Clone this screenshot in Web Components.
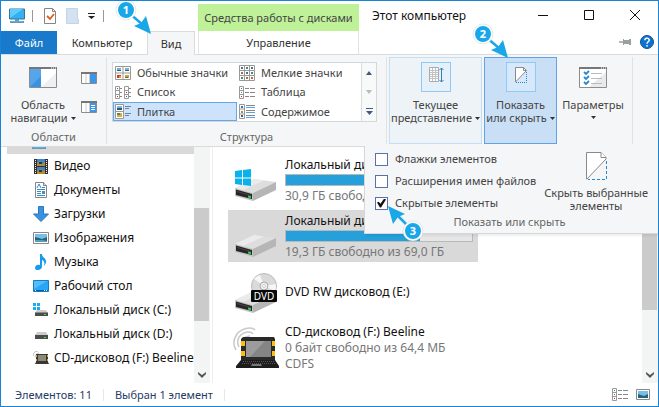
<!DOCTYPE html>
<html lang="ru">
<head>
<meta charset="utf-8">
<title>Этот компьютер</title>
<style>
html,body{margin:0;height:100%}
body{font:11px/16px "Noto Sans","Open Sans",sans-serif;color:#444;background:#fff}
</style>
</head>
<body>
<explorer-window></explorer-window>
<script>
const ICONS = {
pc:['0 0 16 16','<path d="M.5 1h15v10h-15z" fill="#32b1f5" stroke="#39738f"/><path d="M1 10L14 1H1z" fill="#5fccff"/><path d="M6 11h4v2H6zM1 13h14v2H1z" fill="#7394a7"/><path d="M2 13h12v1H2z" fill="#4db9f0"/>'],
props:['0 0 12 16','<path d="M.5.5h8l3 3v12H.5z" fill="#fff" stroke="#858585"/><path d="M8.500.5v3h3" fill="none" stroke="#858585"/><path d="M3 8l3 3 4-5" fill="none" stroke="#e45a1d" stroke-width="1.800"/>'],
folder:['0 0 13 16','<path d="M.5.5h11v11h1v4H.5z" fill="#d3e2f1" stroke="#c2d4e6"/>'],
qmenu:['0 0 7 6','<path d="M0 0h7v1H0zM0 3h7L3.500 6z" fill="#222"/>'],
down:['0 0 5 3','<path d="M0 0h5L2.500 3z" fill="#333"/>'],
min:['0 0 10 10','<path d="M0 5.500h10" stroke="#111"/>'],
max:['0 0 10 10','<path d="M.5.5h9v9h-9z" fill="none" stroke="#111"/>'],
close:['0 0 10 10','<path d="M0 0l10 10M10 0L0 10" stroke="#111"/>'],
pin:['0 0 12 8','<path d="M0 4h5" stroke="#98a29b" stroke-width="1.500"/><path d="M4 1h1v1h5V1h2v6h-2V6H5v1H4z" fill="#98a29b"/>'],
help:['0 0 14 14','<circle cx="7" cy="7" r="6.500" fill="#0a74d0" stroke="#17508a"/><path d="M4.800 5.300c0-3 4.600-2.800 4.400 0C9.100 6.800 7 6.800 7 8.800" fill="none" stroke="#fff" stroke-width="1.500"/><circle cx="7" cy="10.800" r=".9" fill="#fff"/>'],
nav:['0 0 28 21','<path d="M.5.5h27v20H.5z" fill="#fff" stroke="#8c8c8c"/><path d="M12 20L27 6v14z" fill="#eef1f2"/><path d="M0 0h28v2H0z" fill="#777"/><path d="M22 1h1m1 0h1m1 0h1" stroke="#fff"/><path d="M1 2h11v18H1z" fill="#3a92e3"/><path d="M1 20L12 9V2H1z" fill="#56a5ea"/>'],
preview:['0 0 16 12','<path d="M.5.500h15v11H.5z" fill="#fff" stroke="#8c8c8c"/><path d="M0 0h16v2H0z" fill="#777"/><path d="M5 2v9M8.500 2v9" stroke="#ccc"/><path d="M9 2h6v9H9z" fill="#3d95e5"/>'],
details:['0 0 16 12','<path d="M.5.500h15v11H.5z" fill="#fff" stroke="#8c8c8c"/><path d="M0 0h16v2H0z" fill="#777"/><path d="M5 2v9M8.500 2v9" stroke="#ccc"/><path d="M9 2h6v9H9z" fill="#3d95e5"/><path d="M10 4.500h4m-4 2h4m-4 2h4" stroke="#fff"/>'],
medium:['0 0 16 14','<path d="M.5.500h15v13H.5zM8 0v14M0 7h16" fill="#fff" stroke="#999"/><path d="M2 2h4v2H2zM10 2h4v2h-4z" fill="#78b0dc"/><path d="M2 4h4v1H2zM10 4h4v1h-4z" fill="#315f73"/><path d="M2 9h4v3H2z" fill="#c9372c"/><path d="M4 10h2v2H4z" fill="#e8a536"/><path d="M10 9h4v3h-4z" fill="#d39b36"/><path d="M10 11h3v1h-3z" fill="#49763b"/>'],
small:['0 0 16 16','<path d="M.5.5h15v15H.5zM5.500 0v16M10.500 0v16M0 5.500h16M0 10.500h16" fill="#fff" stroke="#999"/><path d="M2 2h2v2H2zM7 7h2v2H7zM12 2h2v2h-2z" fill="#43749d"/><path d="M7 2h2v2H7zM2 12h2v2H2zM12 7h2v2h-2z" fill="#4a8b58"/><path d="M2 7h2v2H2zM12 12h2v2h-2zM7 12h2v2H7z" fill="#b9683a"/>'],
list:['0 0 16 13','<path d="M.5.5h4v12h-4zM0 4.500h5M0 8.500h5M9.500.5h4v12h-4zM9 4.500h5M9 8.500h5" fill="#fff" stroke="#999"/><path d="M5 2.500h2m-2 4h2m-2 4h2M14 2.500h2m-2 4h2m-2 4h2" stroke="#888"/><path d="M2 2h1v1H2zM11 10h1v1h-1z" fill="#326ea5"/><path d="M2 10h1v1H2zM11 6h1v1h-1z" fill="#d22"/>'],
table:['0 0 16 13','<path d="M.5.5h4v12h-4zM0 4.500h5M0 8.500h5" fill="#fff" stroke="#999"/><path d="M6 2.500h4m1 0h5M6 6.500h4m1 0h5M6 10.500h4m1 0h5" stroke="#888"/><path d="M2 2h1v1H2z" fill="#326ea5"/><path d="M2 6h1v1H2z" fill="#48a"/><path d="M2 10h1v1H2z" fill="#d22"/>'],
tile:['0 0 16 15','<path d="M.5.5h8v14h-8zM0 7.500h9" fill="#fff" stroke="#999"/><path d="M2 2h5v4H2z" fill="#79b5e5"/><path d="M2 4h5v2H2z" fill="#31596c"/><path d="M2 9h5v4H2z" fill="#d4b044"/><path d="M2 9h3v2H2z" fill="#548b46"/><path d="M10 2.500h6m-6 2h4m-4 5h6m-6 2h4" stroke="#71849a"/>'],
content:['0 0 16 15','<path d="M.5.5h5v14h-5zM0 5h6M0 10h6" fill="#fff" stroke="#999"/><path d="M2 2h2v2H2z" fill="#297aa5"/><path d="M2 7h2v2H2z" fill="#b48a32"/><path d="M2 11h2v2H2z" fill="#246a9e"/><path d="M7 1.500h9M7 6.500h9M7 11.500h9" stroke="#888"/><path d="M7 3.500h9M7 8.500h9M7 13.500h9" stroke="#5ca4ea"/>'],
up:['0 0 6 4','<path d="M0 4L3 0l3 4z" fill="#42587c"/>'],
dn:['0 0 6 4','<path d="M0 0l3 4 3-4z" fill="#b9b9b9"/>'],
more:['0 0 7 7','<path d="M0 0h7v1H0zM0 3h7L3.500 7z" fill="#42587c"/>'],
view:['0 0 16 16','<path d="M1.500.5h9v14h-9z" fill="#fff" stroke="#aaa"/><path d="M2 3.500h8m-8 2h8m-8 2h8m-8 2h8m-8 2h8M4.500 1v13M7.500 1v13" stroke="#c2c2c2"/><path d="M13.500 1v14m-2-12l2-2 2 2m-4 10l2 2 2-2" fill="none" stroke="#347fb6"/>'],
hide:['0 0 21 28','<path d="M.5 27V.5h14.500l5 5V7L1 27z" fill="#fff" stroke="#8a8a8a"/><path d="M15 .5v5h5" fill="#fff" stroke="#8a8a8a"/><path d="M20.500 9v18.500H2" fill="none" stroke="#2686cb" stroke-dasharray="3 2"/>'],
hideSmall:['0 0 12 16','<path d="M.5 15V.5h8l3 3L.5 15z" fill="#fff" stroke="#8a8a8a"/><path d="M8.500.5v3h3" fill="none" stroke="#8a8a8a"/><path d="M11.500 5v10.500H1" fill="none" stroke="#2686cb" stroke-dasharray="1 1"/>'],
options:['0 0 28 21','<path d="M.5.5h27v20H.5z" fill="#fff" stroke="#8c8c8c"/><path d="M10 20L27 5v15z" fill="#e8ebec"/><path d="M0 0h28v2H0z" fill="#777"/><path d="M22 1h1m1 0h1m1 0h1" stroke="#fff"/><path d="M5 5l2 2 3-3M5 10l2 2 3-3M5 15l2 2 3-3" stroke="#2887d2" stroke-width="1.800" fill="none"/><path d="M12 6.500h11m-11 5h11m-11 5h11" stroke="#bbb"/>'],
video:['0 0 16 16','<path d="M1 1h14v15H1z" fill="#303030"/><path d="M4 1h8v7H4zM4 9h8v7H4z" fill="#3d83d5"/><path d="M4 5l3-2 2 3 3-2v4H4zM4 13l4-2 2 2 2-1v4H4z" fill="#ba8c25"/><path d="M6 4h3v2H6zM6 12h3v2H6z" fill="#1e384f"/><path d="M2.500 2v14M13.500 2v14" stroke="#eee" stroke-dasharray="1 1"/>'],
docs:['0 0 16 16','<path d="M2.500.500h8l3 3v12h-11z" fill="#fff" stroke="#858585"/><path d="M10.500.5v3h3" fill="#ddd" stroke="#858585"/><path d="M4 6l2-4 2 4M9 5.500h3M4 7.500h8m-8 2h4m-4 2h4m-4 2h8" fill="none" stroke="#328bcc"/><path d="M9 9h3v3H9z" fill="#52909d"/>'],
downl:['0 0 16 16','<path d="M5.500.500h5V8h5L8 15.500.5 8h5z" fill="#3a91df" stroke="#2879bd"/>'],
pics:['0 0 16 12','<path d="M.5.5h15v11H.5z" fill="#fff" stroke="#888"/><path d="M2 2h12v8H2z" fill="#79bee9"/><path d="M2 5l4 1 3 1 5-2v5H2z" fill="#267"/><path d="M2 8h8l4 1v1H2z" fill="#589eb9"/>'],
thumb:['0 0 14 11','<path d="M.5.5h13v10H.5z" fill="#fff" stroke="#888"/><path d="M2 2h10v7H2z" fill="#79bee9"/><path d="M2 5l3 1 3 1 4-2v4H2z" fill="#267"/>'],
music:['0 0 16 16','<path d="M7 0h2c0 4 5 4 4 9-1 1-1 2-2 3 1-4 0-5-2-6v7c-1 4-7 4-7 1 0-2 2-4 5-3z" fill="#159ced"/>'],
desk:['0 0 16 12','<path d="M.5.5h15v11H.5z" fill="#28a7f6" stroke="#187cc2"/><path d="M1 9L14 1H1z" fill="#51bdfc"/><path d="M1 10.500h14" stroke="#075b96"/><path d="M2 10.500h1m8 0h1m1 0h1" stroke="#fff"/>'],
diskc:['0 0 16 14','<path d="M0 0h3v3H0zm4 0h3v3H4zM0 4h3v3H0zm4 0h3v3H4z" fill="#16afeb"/><path d="M4 7h9l2 3H2z" fill="#ccc"/><path d="M2 9.500h13V13H2z" fill="#4c4c4c"/><path d="M11 11.500h2" stroke="#43dd57"/>'],
disk:['0 0 16 14','<path d="M4 5h9l2 3H2z" fill="#ccc"/><path d="M2 8h13v4H2z" fill="#4c4c4c"/><path d="M11 10.500h2" stroke="#43dd57"/>'],
cd:['0 0 16 14','<path d="M0 5c0-3 2-5 5-5M2 6c0-2 2-4 4-4" stroke="#bbb" fill="none"/><path d="M3 3h12v8l1 2H2l1-2z" fill="#383838"/><path d="M5 4h8v6H5z" fill="#8a8a80"/><path d="M3 4h1v2H3zm11 0h1v2h-1zM3 8h1v2H3zm11 0h1v2h-1z" fill="#e9ae1b"/>'],
chev:['0 0 8 6','<path d="M0 0l4 3 4-3v2L4 6 0 2z" fill="#555"/>'],
laptop:['0 0 48 42','<path d="M4 23C-2 13 6 1 18 1c2 0 4 1 5 2M7 20C3 12 9 5 17 5c2 0 3 0 4 2M10 17c-2-4 3-8 8-8" fill="none" stroke="#c9c9c9" stroke-width="1.500"/><path d="M11 10h31l1 2v22H9V12z" fill="#292929"/><path d="M14 14h25v16H14z" fill="#858585"/><path d="M14 14h19L18 30h-4z" fill="#9c9c9c"/><path d="M9 14h4v5H9zm0 10h4v5H9zM40 14h3v5h-3zm0 10h3v5h-3z" fill="#ffbc12"/><path d="M9 33h34l4 6v2H4v-2z" fill="#1d1d1d"/><path d="M11 34.500h31M10 36.500h34" stroke="#555" stroke-dasharray="1 1"/><path d="M20 37h9l1 2H19z" fill="#777"/>']
};
const drive='<path d="M1 30l19-9 22 3-23 11z" fill="#dedede"/><path d="M1 30l19-9 10 1.500L9 32z" fill="#ebebeb"/><path d="M1 30l18 5v8L1 38z" fill="#c4c4c4"/><path d="M2 31.500l16 4.500v5L2 37z" fill="#262626"/><path d="M3 33l14 4v1L3 34z" fill="#484848"/><path d="M19 35l23-11v8L19 43z" fill="#b6b6b6"/><path d="M14 37.500l3 .8v2l-3-.8z" fill="#25dc45"/>';
ICONS.bigD=['0 0 44 44',drive];
ICONS.bigC=['0 0 44 44',drive+'<path d="M1 13l7-1v7.500H1zM9 12l8-1v8.500H9zM1 20.500h7V27l-7-1zM9 20.500h8V28l-8-1z" fill="#08b2ed"/>'];
ICONS.dvd=['0 0 44 44',drive+'<circle cx="30" cy="16" r="12.500" fill="#dadada" stroke="#bbb"/><path d="M30 16L20 9a13 13 0 016-4zM30 16l11 5a13 13 0 001-7z" fill="#f6f6f6"/><circle cx="30" cy="16" r="4" fill="#eee" stroke="#aaa"/><circle cx="30" cy="16" r="1.500" fill="#fff" stroke="#aaa" stroke-width=".5"/><rect x="17" y="20" width="26" height="12" rx="1" fill="#080808"/><text x="30" y="29.500" text-anchor="middle" font-size="10" fill="#fff" font-family="Noto Sans">DVD</text>'];

const define=(name,render)=>customElements.define(name,class extends HTMLElement{
  connectedCallback(){
    if(this.shadowRoot)return;
    const t=document.createElement('template');
    t.innerHTML='<style>*{box-sizing:border-box}button{font:inherit;color:inherit;background:none;border:0;padding:0;margin:0}</style>'+render(this);
    this.attachShadow({mode:'open'}).append(t.content.cloneNode(true));
  }
});
const a=(e,n)=>e.getAttribute(n)||'';

define('ui-icon',e=>{const [vb,body]=ICONS[a(e,'name')];const [, ,w,h]=vb.split(' ');
  return `<style>:host{display:inline-flex;flex:none}svg{display:block}</style><svg width="${w}" height="${h}" viewBox="${vb}" aria-hidden="true">${body}</svg>`});

define('call-out',e=>{
  const left=e.hasAttribute('left');
  const arrow=left?'<path d="M34 34L18 18" stroke="#1aa7e8" stroke-width="2.500"/><path d="M9 9l17 8-7 3-5 7z" fill="#1aa7e8"/>':'<path d="M14 14l14 12" stroke="#1aa7e8" stroke-width="2.500"/><path d="M36 35L19 27l7-3 5-7z" fill="#1aa7e8"/>';
  const c=left?34:11;
  return `<style>:host{position:absolute;z-index:5;pointer-events:none}svg{display:block;overflow:visible}</style>
  <svg width="46" height="46">${arrow}<circle cx="${c}" cy="${c}" r="9" fill="#1aa7e8" stroke="#fff" stroke-width="2"/><circle cx="${c}" cy="${c}" r="10" fill="none" stroke="#c4d4dc" stroke-width=".5"/><text x="${c}" y="${c+4}" text-anchor="middle" font-family="Noto Sans" font-size="11" font-weight="700" fill="#fff">${a(e,'n')}</text></svg>`});

define('title-area',()=>`<style>
:host{display:grid;grid-template-columns:197px 161px 1fr auto;height:53px;position:relative;color:#333}
.left,.ctx{display:flex;flex-direction:column}
.quick{display:flex;align-items:center;height:30px;padding-left:8px}
.quick button{display:flex}.quick .a{margin-left:11px}.quick .b{margin-left:10px}.quick .c{margin-left:9px}
.sep{width:1px;height:12px;background:#999;margin-left:7px}.sep.last{margin-left:8px}
.tabs{display:flex;height:23px}
.tabs button{height:23px}
.file{width:56px;background:#1979ca!important;color:#fff!important}
.comp{flex:1}
.view{width:48px;height:24px!important;background:#f5f6f7!important;border:1px solid #dadbdc!important;border-bottom:0!important;margin-right:3px!important;position:relative;z-index:1}
.ctx .h{background:#bff199;height:27px;margin-top:3px;display:flex;align-items:center;justify-content:center;white-space:nowrap;color:#444}
.ctx button{height:23px;border:solid #e3e3e3;border-width:0 1px}
h1{font:12px/16px "Noto Sans",sans-serif;color:#111;margin:7px 0 0 13px;white-space:nowrap}
.right{display:flex;flex-direction:column;justify-content:space-between;align-items:flex-end}
.win{display:flex;gap:36px;padding:9px 18px 0 0}.win button{display:flex}
.tools{display:flex;align-items:center;gap:9px;padding:0 4px 5px 0}.tools button{display:flex}
.c1{left:114px;top:-2px}
.c2{left:471px;top:22px}
</style>
<div class="left"><div class="quick"><ui-icon name="pc"></ui-icon><span class="sep"></span><button class="a" aria-label="Свойства"><ui-icon name="props"></ui-icon></button><button class="b" aria-label="Новая папка"><ui-icon name="folder"></ui-icon></button><button class="c" aria-label="Настройка"><ui-icon name="qmenu"></ui-icon></button><span class="sep last"></span></div>
<div class="tabs"><button class="file">Файл</button><button class="comp">Компьютер</button><button class="view">Вид</button></div></div>
<div class="ctx"><div class="h">Средства работы с дисками</div><button>Управление</button></div>
<h1>Этот компьютер</h1>
<div class="right"><div class="win"><button aria-label="Свернуть"><ui-icon name="min"></ui-icon></button><button aria-label="Развернуть"><ui-icon name="max"></ui-icon></button><button aria-label="Закрыть"><ui-icon name="close"></ui-icon></button></div>
<div class="tools"><button aria-label="Закрепить"><ui-icon name="pin"></ui-icon></button><button aria-label="Справка"><ui-icon name="help"></ui-icon></button></div></div>
<call-out class="c1" n="1"></call-out><call-out class="c2" n="2"></call-out>`);

define('ribbon-group',e=>`<style>
:host{display:flex;flex-direction:column;border-right:1px solid #e1e2e3}
.b{flex:1;display:flex}.l{text-align:center;height:14px;line-height:14px;color:#666}
</style><div class="b"><slot></slot></div>${a(e,'label')?`<div class="l">${a(e,'label')}</div>`:''}`);

define('ribbon-button',e=>`<style>
:host{display:flex}
button{display:flex;flex-direction:column;align-items:center;line-height:13px;width:100%;border:1px solid transparent;padding-top:4px;white-space:nowrap}
.i{width:30px;height:30px;display:flex;align-items:center;justify-content:center;margin-bottom:6px;border:1px solid transparent}
:host([hot]) button{background:#edf3f7;border-color:#c4dff5}:host([hot]) .i,:host([on]) .i{border-color:#90c8f6;background:#e5f1fa}
:host([hot]) .i,:host([on]) .i{padding-bottom:5px}
:host([on]) button{background:#c9dff6;border-color:#62a2e4}:host([on]) .i{background:#d6e8f9}
.d{vertical-align:2px;margin-left:3px}.alone{margin:5px 0 0}
</style><button><span class="i"><ui-icon name="${a(e,'icon')}"></ui-icon></span><span>${a(e,'l1')}</span>${a(e,'l2')?`<span>${a(e,'l2')}<ui-icon class="d" name="down"></ui-icon></span>`:'<ui-icon class="alone" name="down"></ui-icon>'}</button>`);

define('view-gallery',()=>`<style>
:host{display:grid;grid-template-columns:1fr 15px;border:1px solid #d5d8da;background:#fff;margin:5px 9px 0 5px;width:265px;height:60px}
.g{display:grid;grid-template-columns:124px 1fr;grid-template-rows:19px 20px 19px;min-width:0}
.g button{display:flex;align-items:center;gap:6px;padding-left:2px;border:0;white-space:nowrap}
.g .on{background:#cde3fb;border:1px solid #67a7e6;padding-left:1px}
.s{display:grid;grid-template-rows:1fr 1fr 1fr;border-left:1px solid #dadbdc;background:#f8f9f9}.s button{display:grid;place-items:center}
</style><div class="g">${[['medium','Обычные значки'],['small','Мелкие значки'],['list','Список'],['table','Таблица'],['tile','Плитка'],['content','Содержимое']].map(([i,t])=>`<button class="${i=='tile'?'on':''}"><ui-icon name="${i}"></ui-icon>${t}</button>`).join('')}</div>
<div class="s"><button aria-label="Вверх"><ui-icon name="up"></ui-icon></button><button aria-label="Вниз"><ui-icon name="dn"></ui-icon></button><button aria-label="Ещё"><ui-icon name="more"></ui-icon></button></div>`);

define('check-item',e=>`<style>
:host{display:block}
label{display:flex;align-items:center;gap:7px;height:22px;white-space:nowrap}
input{appearance:none;margin:0;width:13px;height:13px;border:1px solid #5b70a8;background:#fff;display:grid;place-items:center}
input:checked::before{content:"";width:9px;height:9px;background:#111;clip-path:polygon(0 45%,20% 35%,38% 58%,80% 0,100% 12%,45% 100%,32% 100%)}
</style><label><input type="checkbox" ${e.hasAttribute('checked')?'checked':''}>${a(e,'text')}</label>`);

define('hide-popup',()=>`<style>
:host{position:absolute;z-index:3;right:0;top:100%;width:294px;background:#f5f6f7;border:solid #d5d7d8;border-width:0 0 1px 1px;box-shadow:1px 2px 2px #0001}
.r{display:flex;padding:2px 10px 0;justify-content:space-between}
button{display:flex;flex-direction:column;align-items:center;line-height:13px;padding-top:4px;white-space:nowrap}
ui-icon{margin-bottom:6px}
.l{text-align:center;line-height:16px;padding-bottom:3px;color:#666;height:19px;padding-right:4px}
call-out{left:14px;top:51px}
</style><div class="r"><div><check-item text="Флажки элементов"></check-item><check-item text="Расширения имен файлов"></check-item><check-item text="Скрытые элементы" checked></check-item></div>
<button><ui-icon name="hide"></ui-icon><span>Скрыть выбранные</span><span>элементы</span></button></div><div class="l">Показать или скрыть</div><call-out left n="3"></call-out>`);

define('ribbon-bar',()=>`<style>
:host{display:flex;position:relative;background:#f5f6f7;border:solid #dadbdc;border-width:1px 0;height:93px;padding:2px 0}
.small{display:flex;flex-direction:column;gap:17px;padding:15px 8px 0 4px}.small button{display:flex}
.g1{width:106px}.nav{width:68px;margin-left:8px}
.g3{padding-right:5px}
.cur{width:93px;margin-left:2px}.show{width:73px;margin:0 2px}.opt{width:68px}
</style>
<ribbon-group class="g1" label="Области"><ribbon-button class="nav" icon="nav" l1="Область" l2="навигации"></ribbon-button><div class="small"><button aria-label="Область просмотра"><ui-icon name="preview"></ui-icon></button><button aria-label="Область сведений"><ui-icon name="details"></ui-icon></button></div></ribbon-group>
<ribbon-group label="Структура"><view-gallery></view-gallery></ribbon-group>
<ribbon-group class="g3"><ribbon-button class="cur" hot icon="view" l1="Текущее" l2="представление"></ribbon-button><ribbon-button class="show" on icon="hideSmall" l1="Показать" l2="или скрыть"></ribbon-button><ribbon-button class="opt" icon="options" l1="Параметры"></ribbon-button></ribbon-group>
<hide-popup></hide-popup>`);

define('scroll-bar',e=>`<style>
:host{display:flex;flex-direction:column;width:16px;flex:none;background:#f3f5f5}
i{background:#cbcbcb;margin-right:1px}.t{flex:${a(e,'before')}}i{flex:${a(e,'thumb')}}.u{flex:${a(e,'after')};display:flex;align-items:flex-end;justify-content:center}
ui-icon{margin-bottom:5px}
</style><span class="t"></span><i></i><span class="u"><ui-icon name="chev"></ui-icon></span>`);

define('nav-tree',()=>`<style>
:host{display:flex;width:212px;flex:none;border-right:1px solid #eee;font-size:12px;color:#111}
nav{flex:1;min-width:0;display:flex;flex-direction:column;justify-content:flex-end;overflow:hidden;padding-bottom:13px}
a{display:flex;align-items:center;height:24px;flex:none;padding-left:32px;color:inherit;text-decoration:none;white-space:nowrap}
.i{width:16px;display:flex;justify-content:center;margin-right:5px}
.root{background:#d9d9d9;padding-left:24px;margin-left:6px}
scroll-bar{margin-right:2px}
</style><nav><a href="#" class="root" aria-label="Этот компьютер"><span class="i"><ui-icon name="pc"></ui-icon></span></a>${[['video','Видео'],['docs','Документы'],['downl','Загрузки'],['pics','Изображения'],['music','Музыка'],['desk','Рабочий стол'],['diskc','Локальный диск (C:)'],['disk','Локальный диск (D:)'],['cd','CD-дисковод (F:) Beeline']].map(([i,t])=>`<a href="#"><span class="i"><ui-icon name="${i}"></ui-icon></span>${t}</a>`).join('')}</nav><scroll-bar before="61" thumb="113" after="62"></scroll-bar>`);

define('drive-tile',e=>`<style>
:host{display:flex;align-items:center;width:250px;height:52px;color:#777;font-size:12px;white-space:nowrap}
:host([sel]){background:#d9d9d9}
.i{width:48px;margin:0 5px 0 4px;display:flex;justify-content:center}
.b{flex:1;min-width:0;margin-right:5px}.n{color:#111}
.m{height:12px;border:1px solid #b9b9b9;background:#e6e6e6;margin:1px 0 2px}.m i{display:block;height:100%;background:#26a0da}
</style><span class="i"><ui-icon name="${a(e,'icon')}"></ui-icon></span><div class="b"><div class="n">${a(e,'name')}</div>${a(e,'fill')?`<div class="m"><i style="width:${a(e,'fill')}"></i></div>`:''}<slot></slot></div>`);

define('file-pane',()=>`<style>
:host{display:flex;flex:1;min-width:0}
main{flex:1;min-width:0;display:flex;flex-direction:column;gap:4px;padding:7px 0 0 15px}
</style><main><drive-tile icon="bigC" name="Локальный диск (C:)" fill="86%">30,9 ГБ свободно из 232 ГБ</drive-tile><drive-tile sel icon="bigD" name="Локальный диск (D:)" fill="72%">19,3 ГБ свободно из 69,0 ГБ</drive-tile><drive-tile icon="dvd" name="DVD RW дисковод (E:)"></drive-tile><drive-tile icon="laptop" name="CD-дисковод (F:) Beeline">0 байт свободно из 64,4 МБ<br>CDFS</drive-tile></main><scroll-bar before="0" thumb="163" after="73"></scroll-bar>`);

define('status-bar',()=>`<style>
:host{display:flex;align-items:center;height:23px;padding:0 8px 0 14px;color:#1f3b66}
span{border-right:1px solid #e8e8e8;padding-right:11px;margin-right:11px;line-height:12px}
div{margin-left:auto;display:flex;align-items:center;gap:8px}button{display:flex}
</style><span>Элементов: 11</span><span>Выбран 1 элемент</span><div><button aria-label="Таблица"><ui-icon name="table"></ui-icon></button><button aria-label="Значки"><ui-icon name="thumb"></ui-icon></button></div>`);

define('explorer-window',()=>`<style>
:host{display:flex;flex-direction:column;height:100vh;box-sizing:border-box;border:1px solid #1883d7;background:#fff;overflow:hidden}
.c{flex:1;display:flex;min-height:0}
</style><title-area></title-area><ribbon-bar></ribbon-bar><div class="c"><nav-tree></nav-tree><file-pane></file-pane></div><status-bar></status-bar>`);
</script>
</body>
</html>
